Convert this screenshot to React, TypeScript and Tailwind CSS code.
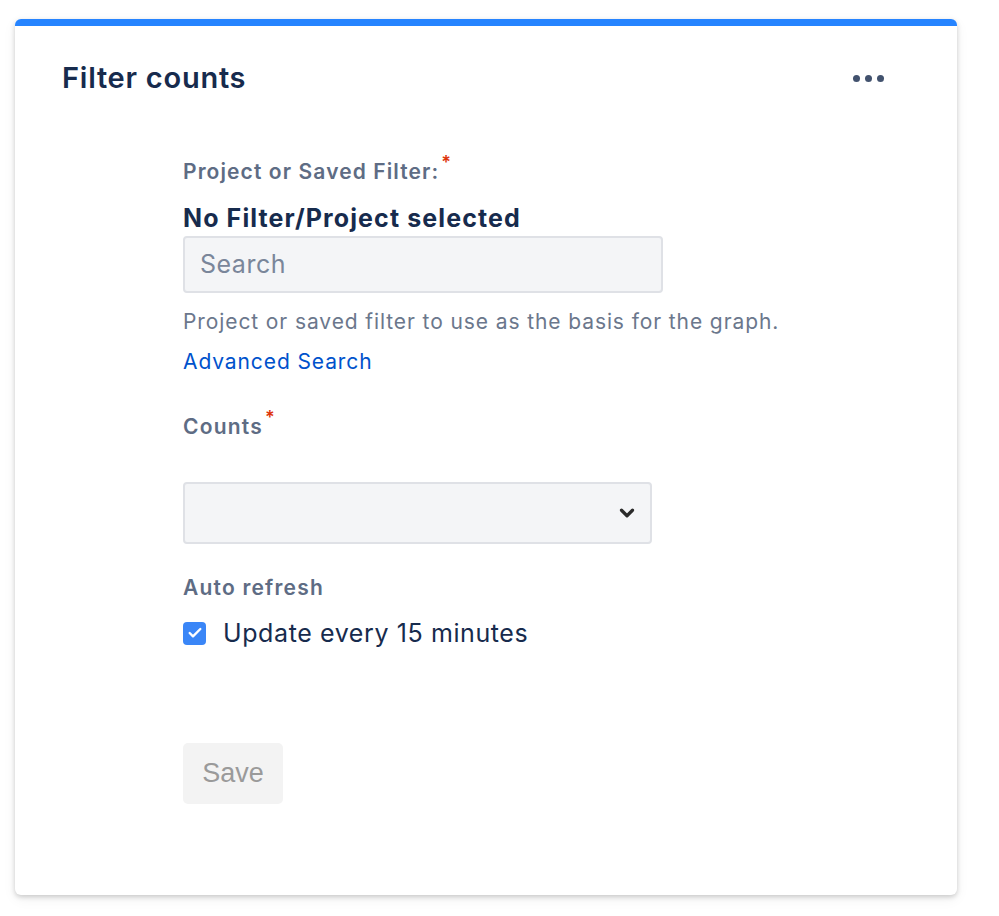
import { Check, ChevronDown } from 'lucide-react'

const font = { fontFamily: 'Inter, "Noto Sans", sans-serif' }

function Required() {
  return <span className="relative -top-[10px] ml-[2px] text-[18px] tracking-normal text-[#DE350B]">*</span>
}

export default function App() {
  return (
    <div className="min-h-[916px] w-[999px] bg-white pl-[15px] pt-[19px]" style={font}>
      <div className="w-[942px] h-[876px] overflow-hidden rounded-[6px] bg-white shadow-[0_2px_5px_rgba(0,0,0,0.18),0_4px_14px_rgba(0,0,0,0.06)]">
        <div className="h-[7px] bg-[#2684FF]" />
        <div className="flex items-center justify-between pl-[47px] pr-[73px] pt-[34px]">
          <h1 className="text-[29px] font-semibold leading-[36px] tracking-[0.75px] text-[#172B4D]">Filter counts</h1>
          <div className="flex gap-[5px]">
            <span className="h-[7px] w-[7px] rounded-full bg-[#42526E]" />
            <span className="h-[7px] w-[7px] rounded-full bg-[#42526E]" />
            <span className="h-[7px] w-[7px] rounded-full bg-[#42526E]" />
          </div>
        </div>

        <div className="pl-[168px] pt-[60px]">
          <label className="block text-[21px] font-semibold leading-[32px] tracking-[1.1px] text-[#5E6C84]">
            Project or Saved Filter:<Required />
          </label>
          <div className="mt-[13px] text-[25px] font-bold leading-[32px] tracking-[1.1px] text-[#172B4D]">No Filter/Project selected</div>
          <div className="mt-[2px] flex h-[57px] w-[480px] items-center rounded-[4px] border-2 border-[#DFE1E6] bg-[#F4F5F7] px-[15px] text-[25px] tracking-[0.5px] text-[#7A869A]">
            Search
          </div>
          <p className="mt-[14px] text-[21px] leading-[30px] tracking-[0.9px] text-[#6B778C]">
            Project or saved filter to use as the basis for the graph.
          </p>
          <a className="mt-[10px] block text-[21px] leading-[30px] tracking-[0.9px] text-[#0052CC]">Advanced Search</a>

          <label className="mt-[34px] block text-[21px] font-semibold leading-[32px] tracking-[1.2px] text-[#5E6C84]">
            Counts<Required />
          </label>
          <div className="mt-[38px] flex h-[62px] w-[469px] items-center justify-end rounded-[4px] border-2 border-[#DFE1E6] bg-[#F4F5F7] pr-[12px]">
            <ChevronDown size={22} strokeWidth={3.5} className="text-[#2B2B2B]" />
          </div>

          <label className="mt-[28px] block text-[21px] font-semibold leading-[32px] tracking-[1.2px] text-[#5E6C84]">Auto refresh</label>
          <div className="mt-[13px] flex items-center gap-[17px]">
            <span className="flex h-[23px] w-[23px] items-center justify-center rounded-[4px] bg-[#3A86F7]">
              <Check size={16} strokeWidth={3.5} className="text-white" />
            </span>
            <span className="text-[25px] leading-[32px] tracking-[0.6px] text-[#172B4D]">Update every 15 minutes</span>
          </div>

          <button
            className="mt-[94px] h-[61px] w-[100px] rounded-[5px] bg-[#F3F3F3] text-[27px] text-[#9A9A9A]"
            style={{ fontFamily: '"Liberation Sans", Arial, sans-serif' }}
          >
            Save
          </button>
        </div>
      </div>
    </div>
  )
}
